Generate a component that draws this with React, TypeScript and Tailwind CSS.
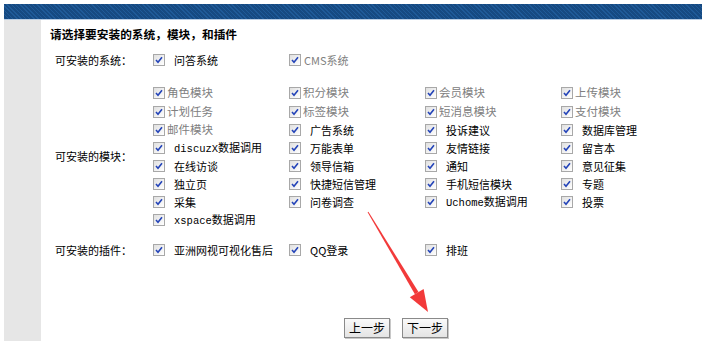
const modules: { name: string; disabled?: boolean; latin?: boolean }[][] = [
  [{ name: "角色模块", disabled: true }, { name: "积分模块", disabled: true }, { name: "会员模块", disabled: true }, { name: "上传模块", disabled: true }],
  [{ name: "计划任务", disabled: true }, { name: "标签模块", disabled: true }, { name: "短消息模块", disabled: true }, { name: "支付模块", disabled: true }],
  [{ name: "邮件模块", disabled: true }, { name: "广告系统" }, { name: "投诉建议" }, { name: "数据库管理" }],
  [{ name: "discuzX数据调用", latin: true }, { name: "万能表单" }, { name: "友情链接" }, { name: "留言本" }],
  [{ name: "在线访谈" }, { name: "领导信箱" }, { name: "通知" }, { name: "意见征集" }],
  [{ name: "独立页" }, { name: "快捷短信管理" }, { name: "手机短信模块" }, { name: "专题" }],
  [{ name: "采集" }, { name: "问卷调查" }, { name: "Uchome数据调用", latin: true }, { name: "投票" }],
  [{ name: "xspace数据调用", latin: true }],
];

const plugins = ["亚洲网视可视化售后", "QQ登录", "排班"];

function Box() {
  return (
    <span className="flex h-[12px] w-[12px] shrink-0 items-center justify-center border border-[#a8a8a8] bg-[linear-gradient(135deg,#e0e0e0,#ffffff)]">
      <svg width="8" height="8" viewBox="0 0 8 8">
        <path d="M1 4 L3 6.2 L7 1.2" fill="none" stroke="#2343b8" strokeWidth="1.6" />
      </svg>
    </span>
  );
}

function Item({ name, disabled, latin }: { name: string; disabled?: boolean; latin?: boolean }) {
  return (
    <div className="flex items-center">
      <Box />
      <span
        className={
          disabled
            ? "ml-[2px] text-[11.5px] text-[#808080]"
            : "ml-[9px] text-[11px] text-black"
        }
      >
        {latin ? <Latin text={name} /> : name}
      </span>
    </div>
  );
}

function Latin({ text }: { text: string }) {
  const m = text.match(/^([A-Za-z]+)(.*)$/);
  if (!m) return <>{text}</>;
  return (
    <>
      <span className="font-['Liberation_Mono',monospace] text-[10.5px]">{m[1]}</span>
      {m[2]}
    </>
  );
}

export default function App() {
  return (
    <div className="relative flex h-[341px] w-[707px] flex-col overflow-hidden bg-white pt-[4px] font-['Noto_Sans_CJK_SC','Noto_Sans',sans-serif] text-[11px] leading-none">
      <div className="ml-[4px] h-[15px] w-[698px] bg-[repeating-linear-gradient(45deg,#1f5a98_0px,#1f5a98_1px,#164a82_1px,#164a82_3px)]" />
      <div className="ml-[4px] h-[1px] w-[698px] bg-[#b9cde4]" />
      <div className="flex flex-1">
        <div className="ml-[4px] w-[37px] bg-[#e6e6e6]" />
        <div className="flex-1 pl-[9px] pt-[6px]">
          <div className="flex h-[16px] items-center text-[11.7px] font-bold">请选择要安装的系统，模块，和插件</div>

          <div className="mt-[8px] flex h-[20px] items-center">
            <div className="w-[103px] pl-[5px]">可安装的系统：</div>
            <div className="w-[136px]">
              <Item name="问答系统" />
            </div>
            <div className="flex items-center">
              <Box />
              <span className="ml-[3px] text-[11px] text-[#808080]">CMS系统</span>
            </div>
          </div>

          <div className="mt-[13px] flex">
            <div className="flex w-[103px] items-center pl-[5px]">可安装的模块：</div>
            <div className="flex flex-col">
              {modules.map((row, i) => (
                <div key={i} className={i < 2 ? "flex h-[19px] items-center" : "flex h-[18px] items-center"}>
                  {row.map((m) => (
                    <div key={m.name} className="w-[136px]">
                      <Item {...m} />
                    </div>
                  ))}
                </div>
              ))}
            </div>
          </div>

          <div className="mt-[11px] flex h-[20px] items-center">
            <div className="w-[103px] pl-[5px]">可安装的插件：</div>
            {plugins.map((p) => (
              <div key={p} className="w-[136px]">
                <Item name={p} />
              </div>
            ))}
          </div>

          <div className="mt-[58px] flex gap-[12px] pl-[294px]">
            {["上一步", "下一步"].map((b) => (
              <button
                key={b}
                className="h-[20px] w-[46px] border border-[#8a8a8a] bg-[linear-gradient(#fafafa,#e4e4e4)] text-[12px] text-black shadow-[1px_1px_0_#c8c8c8]"
              >
                {b}
              </button>
            ))}
          </div>
        </div>
      </div>

      <svg className="pointer-events-none absolute left-0 top-0" width="707" height="341">
        <polygon points="367.6,212.2 368.4,211.8 418.5,292 414.9,294.2" fill="#f23a3a" />
        <polygon points="428,312 409.8,297.2 423.6,289" fill="#f23a3a" />
      </svg>
    </div>
  );
}
